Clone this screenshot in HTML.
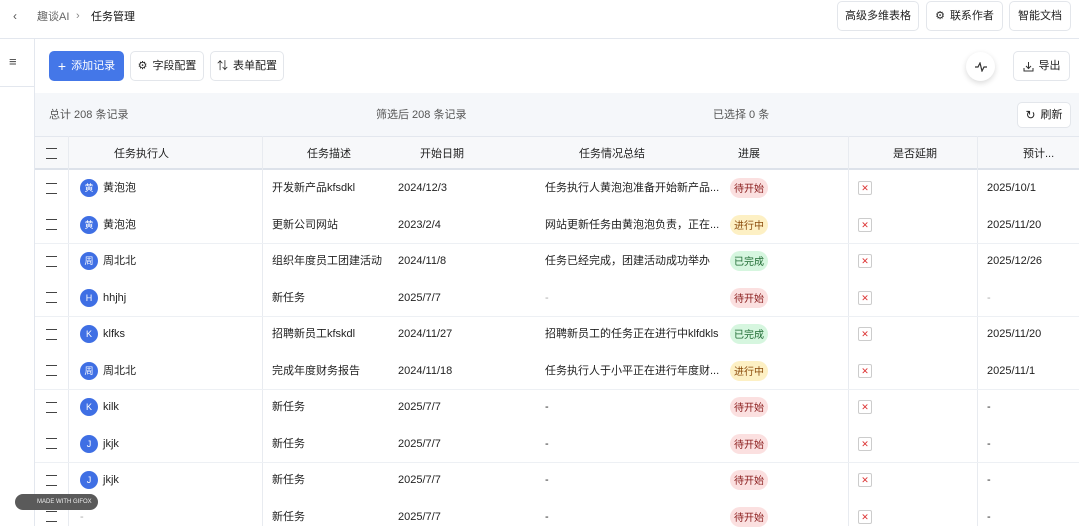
<!DOCTYPE html>
<html><head><meta charset="utf-8"><style>
*{box-sizing:border-box;margin:0;padding:0}
body{width:1079px;height:526px;overflow:hidden;background:#fff;font-family:"Liberation Sans","Noto Sans CJK SC",sans-serif;font-size:11px;line-height:14px;color:#222;position:relative}
.a{position:absolute}
.btn{position:absolute;border:1px solid #e3e6eb;border-radius:5px;background:#fff;display:flex;align-items:center;justify-content:center;gap:5px;font-size:11px;color:#222}
.cb{position:absolute;left:46px;width:11px;height:11px;border-top:1px solid #444;border-bottom:1px solid #444}
.av{position:absolute;left:80px;width:18px;height:18px;border-radius:50%;background:#3f6fe4;color:#fff;font-size:9px;line-height:18px;text-align:center}
.tag{position:absolute;left:730px;width:38px;height:20px;border-radius:10px;font-size:10px;line-height:12px;display:flex;align-items:center;justify-content:center;padding-top:3px}
.r{background:#fbe0e0;color:#8a1c1c}.y{background:#fdf0c4;color:#8a4a0a}.g{background:#d6f6df;color:#1f6b33}
.x{position:absolute;left:858px;width:14px;height:14px;border:1px solid #ccc;border-radius:2px;color:#d33;font-size:9px;line-height:12px;text-align:center}
.t{position:absolute;white-space:nowrap;height:14px;line-height:14px}
.hd{position:absolute;top:147px;font-size:11px;line-height:14px;color:#222}
</style></head><body>
<div class="t" style="left:13px;top:9px;color:#555;font-size:12px">‹</div>
<div class="t" style="left:37px;top:10px;color:#666">趣谈AI</div>
<div class="t" style="left:76px;top:9px;color:#888">›</div>
<div class="t" style="left:91px;top:10px;color:#111">任务管理</div>
<div class="btn" style="left:837px;top:1px;width:82px;height:30px">高级多维表格</div>
<div class="btn" style="left:926px;top:1px;width:77px;height:30px"><span style="font-size:11px">⚙</span>联系作者</div>
<div class="btn" style="left:1009px;top:1px;width:62px;height:30px">智能文档</div>
<div class="a" style="left:0;top:38px;width:1079px;height:1px;background:#e3e7ee"></div>
<div class="a" style="left:34px;top:38px;width:1px;height:488px;background:#e3e7ee"></div>
<div class="a" style="left:0;top:86px;width:34px;height:1px;background:#e3e7ee"></div>
<div class="t" style="left:9px;top:55px;font-size:13px;color:#444">≡</div>
<div class="btn" style="left:49px;top:51px;width:75px;height:30px;background:#4477e8;border-color:#4477e8;color:#fff"><span style="font-size:14px">+</span>添加记录</div>
<div class="btn" style="left:130px;top:51px;width:74px;height:30px"><span>⚙</span>字段配置</div>
<div class="btn" style="left:210px;top:51px;width:74px;height:30px"><span>⇅</span>表单配置</div>
<div class="a" style="left:966px;top:52px;width:29px;height:29px;border-radius:50%;background:#fff;box-shadow:0 2px 6px rgba(0,0,0,.15);display:flex;align-items:center;justify-content:center"><svg width="12" height="10"><path d="M0 5h3l2-4 2 8 2-4h3" stroke="#333" fill="none" stroke-width="1.2"/></svg></div>
<div class="btn" style="left:1013px;top:51px;width:57px;height:30px"><svg width="11" height="11"><path d="M5.5 1v6M3 5l2.5 2.5L8 5M1 7v3h9V7" stroke="#333" fill="none"/></svg>导出</div>
<div class="a" style="left:35px;top:93px;width:1044px;height:43px;background:#f5f7fa"></div>
<div class="t" style="left:49px;top:108px;color:#555">总计 208 条记录</div>
<div class="t" style="left:376px;top:108px;color:#555">筛选后 208 条记录</div>
<div class="t" style="left:713px;top:108px;color:#555">已选择 0 条</div>
<div class="btn" style="left:1017px;top:102px;width:54px;height:26px"><span style="font-size:12px">↻</span>刷新</div>
<div class="a" style="left:35px;top:136px;width:1044px;height:34px;background:#f7f8fa;border-top:1px solid #e3e7ee;border-bottom:2px solid #dde2ea"></div>
<div class="cb" style="top:148px"></div>
<div class="hd" style="left:114px">任务执行人</div>
<div class="hd" style="left:307px">任务描述</div>
<div class="hd" style="left:420px">开始日期</div>
<div class="hd" style="left:579px">任务情况总结</div>
<div class="hd" style="left:738px">进展</div>
<div class="hd" style="left:893px">是否延期</div>
<div class="hd" style="left:1023px">预计...</div>
<div class="a" style="left:68px;top:136px;width:1px;height:390px;background:#e8ebf0"></div>
<div class="a" style="left:262px;top:136px;width:1px;height:390px;background:#e8ebf0"></div>
<div class="a" style="left:848px;top:136px;width:1px;height:390px;background:#e8ebf0"></div>
<div class="a" style="left:977px;top:136px;width:1px;height:390px;background:#e8ebf0"></div>
<div class="a" style="left:35px;top:243px;width:1044px;height:1px;background:#edf0f4"></div>
<div class="a" style="left:35px;top:316px;width:1044px;height:1px;background:#edf0f4"></div>
<div class="a" style="left:35px;top:389px;width:1044px;height:1px;background:#edf0f4"></div>
<div class="a" style="left:35px;top:462px;width:1044px;height:1px;background:#edf0f4"></div>
<div class="cb" style="top:183px"></div><div class="av" style="top:179px">黄</div><div class="t" style="left:103px;top:181px">黄泡泡</div><div class="t" style="left:272px;top:181px">开发新产品kfsdkl</div><div class="t" style="left:398px;top:181px">2024/12/3</div><div class="t" style="left:545px;top:181px">任务执行人黄泡泡准备开始新产品...</div><div class="tag r" style="top:178px">待开始</div><div class="x" style="top:181px">✕</div><div class="t" style="left:987px;top:181px">2025/10/1</div>
<div class="cb" style="top:219px"></div><div class="av" style="top:216px">黄</div><div class="t" style="left:103px;top:218px">黄泡泡</div><div class="t" style="left:272px;top:218px">更新公司网站</div><div class="t" style="left:398px;top:218px">2023/2/4</div><div class="t" style="left:545px;top:218px">网站更新任务由黄泡泡负责，正在...</div><div class="tag y" style="top:215px">进行中</div><div class="x" style="top:218px">✕</div><div class="t" style="left:987px;top:218px">2025/11/20</div>
<div class="cb" style="top:256px"></div><div class="av" style="top:252px">周</div><div class="t" style="left:103px;top:254px">周北北</div><div class="t" style="left:272px;top:254px">组织年度员工团建活动</div><div class="t" style="left:398px;top:254px">2024/11/8</div><div class="t" style="left:545px;top:254px">任务已经完成，团建活动成功举办</div><div class="tag g" style="top:251px">已完成</div><div class="x" style="top:254px">✕</div><div class="t" style="left:987px;top:254px">2025/12/26</div>
<div class="cb" style="top:292px"></div><div class="av" style="top:289px">H</div><div class="t" style="left:103px;top:291px">hhjhj</div><div class="t" style="left:272px;top:291px">新任务</div><div class="t" style="left:398px;top:291px">2025/7/7</div><div class="t" style="left:545px;top:291px;color:#aaa">-</div><div class="tag r" style="top:288px">待开始</div><div class="x" style="top:291px">✕</div><div class="t" style="left:987px;top:291px;color:#aaa">-</div>
<div class="cb" style="top:329px"></div><div class="av" style="top:325px">K</div><div class="t" style="left:103px;top:327px">klfks</div><div class="t" style="left:272px;top:327px">招聘新员工kfskdl</div><div class="t" style="left:398px;top:327px">2024/11/27</div><div class="t" style="left:545px;top:327px">招聘新员工的任务正在进行中klfdkls</div><div class="tag g" style="top:324px">已完成</div><div class="x" style="top:327px">✕</div><div class="t" style="left:987px;top:327px">2025/11/20</div>
<div class="cb" style="top:365px"></div><div class="av" style="top:362px">周</div><div class="t" style="left:103px;top:364px">周北北</div><div class="t" style="left:272px;top:364px">完成年度财务报告</div><div class="t" style="left:398px;top:364px">2024/11/18</div><div class="t" style="left:545px;top:364px">任务执行人于小平正在进行年度财...</div><div class="tag y" style="top:361px">进行中</div><div class="x" style="top:364px">✕</div><div class="t" style="left:987px;top:364px">2025/11/1</div>
<div class="cb" style="top:402px"></div><div class="av" style="top:398px">K</div><div class="t" style="left:103px;top:400px">kilk</div><div class="t" style="left:272px;top:400px">新任务</div><div class="t" style="left:398px;top:400px">2025/7/7</div><div class="t" style="left:545px;top:400px">-</div><div class="tag r" style="top:397px">待开始</div><div class="x" style="top:400px">✕</div><div class="t" style="left:987px;top:400px">-</div>
<div class="cb" style="top:438px"></div><div class="av" style="top:435px">J</div><div class="t" style="left:103px;top:437px">jkjk</div><div class="t" style="left:272px;top:437px">新任务</div><div class="t" style="left:398px;top:437px">2025/7/7</div><div class="t" style="left:545px;top:437px">-</div><div class="tag r" style="top:434px">待开始</div><div class="x" style="top:437px">✕</div><div class="t" style="left:987px;top:437px">-</div>
<div class="cb" style="top:475px"></div><div class="av" style="top:471px">J</div><div class="t" style="left:103px;top:473px">jkjk</div><div class="t" style="left:272px;top:473px">新任务</div><div class="t" style="left:398px;top:473px">2025/7/7</div><div class="t" style="left:545px;top:473px">-</div><div class="tag r" style="top:470px">待开始</div><div class="x" style="top:473px">✕</div><div class="t" style="left:987px;top:473px">-</div>
<div class="cb" style="top:511px"></div><div class="t" style="left:80px;top:510px;color:#aaa">-</div><div class="t" style="left:272px;top:510px">新任务</div><div class="t" style="left:398px;top:510px">2025/7/7</div><div class="t" style="left:545px;top:510px">-</div><div class="tag r" style="top:507px">待开始</div><div class="x" style="top:510px">✕</div><div class="t" style="left:987px;top:510px">-</div>
<div class="a" style="left:15px;top:494px;width:83px;height:16px;border-radius:8px;background:#5a5a5a;color:#eee;font-size:6px;line-height:16px;padding-left:22px;white-space:nowrap;overflow:hidden">MADE WITH GIFOX</div>
</body></html>
